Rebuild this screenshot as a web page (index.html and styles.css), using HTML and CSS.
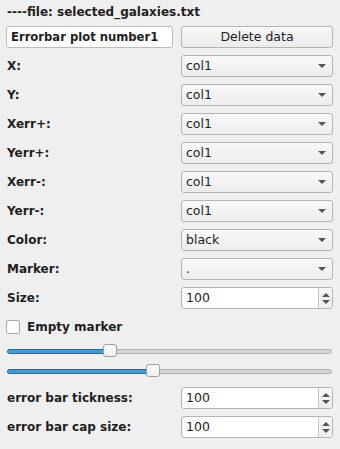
FILE: index.html
```html
<!DOCTYPE HTML>
<html lang="en">
<head>
    <meta charset="UTF-8">
    <meta name="viewport" content="width=device-width, initial-scale=1.0">
    <title>errorbar options</title>
    <link rel="stylesheet" href="styles.css">
</head>
<body>
    <div class="panel">
        <div class="title">----file: selected_galaxies.txt</div>

        <div class="row">
            <div class="lineedit">Errorbar plot number1</div>
            <div class="button">Delete data</div>
        </div>

        <div class="row"><span class="label">X:</span><div class="combo"><span>col1</span><i class="arrow"></i></div></div>
        <div class="row"><span class="label">Y:</span><div class="combo"><span>col1</span><i class="arrow"></i></div></div>
        <div class="row"><span class="label">Xerr+:</span><div class="combo"><span>col1</span><i class="arrow"></i></div></div>
        <div class="row"><span class="label">Yerr+:</span><div class="combo"><span>col1</span><i class="arrow"></i></div></div>
        <div class="row"><span class="label">Xerr-:</span><div class="combo"><span>col1</span><i class="arrow"></i></div></div>
        <div class="row"><span class="label">Yerr-:</span><div class="combo"><span>col1</span><i class="arrow"></i></div></div>
        <div class="row"><span class="label">Color:</span><div class="combo"><span>black</span><i class="arrow"></i></div></div>
        <div class="row"><span class="label">Marker:</span><div class="combo"><span>.</span><i class="arrow"></i></div></div>
        <div class="row"><span class="label">Size:</span>
            <div class="spin"><span class="val">100</span><span class="steps"><i class="up"></i><i class="down"></i></span></div>
        </div>

        <div class="check-row">
            <span class="checkbox"></span>
            <span class="label">Empty marker</span>
        </div>

        <div class="slider first">
            <div class="fill" style="width: 31.5%"></div>
        </div>
        <div class="slider">
            <div class="fill" style="width: 44.6%"></div>
        </div>

        <div class="row low"><span class="label">error bar tickness:</span>
            <div class="spin"><span class="val">100</span><span class="steps"><i class="up"></i><i class="down"></i></span></div>
        </div>
        <div class="row"><span class="label">error bar cap size:</span>
            <div class="spin"><span class="val">100</span><span class="steps"><i class="up"></i><i class="down"></i></span></div>
        </div>
    </div>
</body>
</html>
```

FILE: styles.css
```css
body {
    margin: 0;
    background-color: #efefef;
    font-family: "DejaVu Sans", sans-serif;
    font-size: 12px;
    color: #1e1e1e;
}

.panel {
    display: flex;
    flex-direction: column;
    gap: 7px;
    padding: 0 7px 0 6px;
}

.title {
    font-weight: bold;
    height: 19px;
    line-height: 24px;
    padding-left: 1px;
}

.row {
    display: grid;
    grid-template-columns: 167px 152px;
    column-gap: 8px;
    height: 22px;
    align-items: center;
}

.row.low {
    margin-top: 3px;
}

.label {
    font-weight: bold;
    padding-left: 1px;
    white-space: nowrap;
}

.lineedit {
    height: 20px;
    line-height: 20px;
    background: #fff;
    border: 1px solid #bcbcbc;
    border-radius: 3px;
    padding-left: 4px;
    font-weight: bold;
    font-size: 11.6px;
    white-space: nowrap;
    overflow: hidden;
}

.button {
    height: 20px;
    line-height: 20px;
    border: 1px solid #b4b4b4;
    border-radius: 3px;
    background: linear-gradient(#f7f7f7, #ececec);
    text-align: center;
    font-size: 12.5px;
}

.combo {
    position: relative;
    height: 20px;
    line-height: 20px;
    border: 1px solid #b4b4b4;
    border-radius: 3px;
    background: linear-gradient(#f8f8f8, #ededed);
    padding-left: 4px;
    font-size: 12.5px;
}

.arrow {
    position: absolute;
    right: 6px;
    top: 8px;
    width: 0;
    height: 0;
    border-left: 4px solid transparent;
    border-right: 4px solid transparent;
    border-top: 4px solid #555;
}

.spin {
    display: flex;
    height: 20px;
    border: 1px solid #b4b4b4;
    border-radius: 3px;
    background: #fff;
    overflow: hidden;
}

.spin .val {
    flex: 1;
    line-height: 20px;
    padding-left: 4px;
    font-size: 12.5px;
}

.steps {
    width: 13px;
    border-left: 1px solid #c8c8c8;
    background: linear-gradient(#f7f7f7, #ececec);
    display: flex;
    flex-direction: column;
    align-items: center;
    justify-content: center;
    gap: 3px;
}

.steps .up {
    border-left: 4px solid transparent;
    border-right: 4px solid transparent;
    border-bottom: 4px solid #555;
}

.steps .down {
    border-left: 4px solid transparent;
    border-right: 4px solid transparent;
    border-top: 4px solid #555;
}

.check-row {
    display: flex;
    align-items: center;
    gap: 6px;
    height: 14px;
    margin-top: 4px;
}

.checkbox {
    width: 12px;
    height: 12px;
    background: #fff;
    border: 1px solid #a8a8a8;
    border-radius: 2px;
}

.slider {
    position: relative;
    height: 12px;
    margin: 1px 1px 0 1px;
}

.slider.first {
    margin-top: 4px;
}

.slider::before {
    content: "";
    position: absolute;
    left: 0;
    right: 0;
    top: 4px;
    height: 3px;
    border: 1px solid #b2b2b2;
    border-radius: 3px;
    background: #d4d4d4;
}

.slider .fill {
    position: absolute;
    left: 0;
    top: 4px;
    height: 3px;
    border: 1px solid #1f6ea3;
    border-radius: 3px;
    background: #3b9de2;
}

.slider .fill::after {
    content: "";
    position: absolute;
    right: -7px;
    top: -6px;
    width: 12px;
    height: 11px;
    background: linear-gradient(#ffffff, #f0f0f0);
    border: 1px solid #9e9e9e;
    border-radius: 3px;
}
```
